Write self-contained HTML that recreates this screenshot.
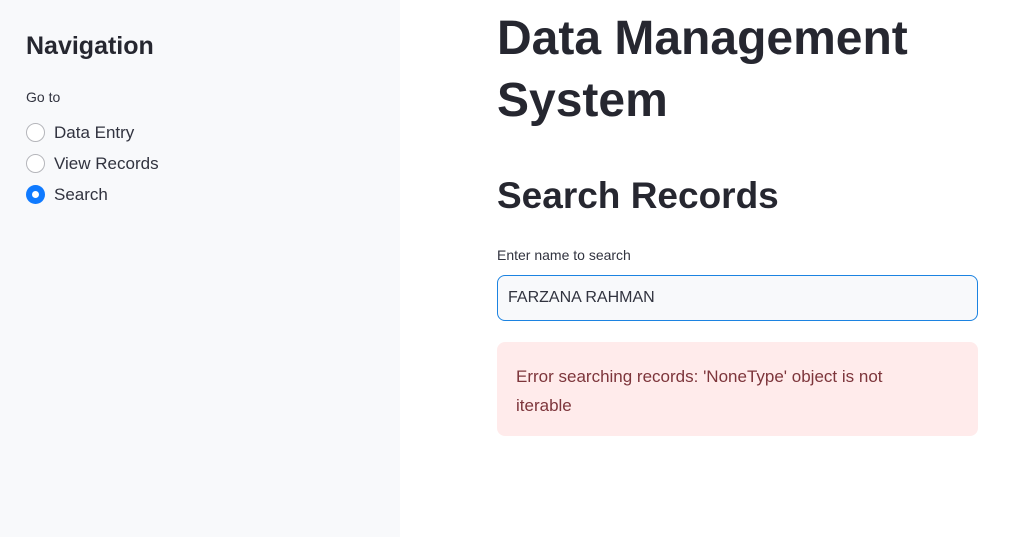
<!DOCTYPE html>
<html><head><style>
body{margin:0;width:1027px;height:537px;overflow:hidden;font-family:"Liberation Sans",sans-serif;color:#31333f;background:#fff;position:relative}
.sb{position:absolute;left:0;top:0;width:400px;height:537px;background:#f8f9fb}
.abs{position:absolute;white-space:nowrap}
.r{position:absolute;left:26px;width:17px;height:17px;border:1px solid #b5b6bb;border-radius:50%;background:#fff}
.r.on{border:none;width:19px;height:19px;background:#0f7aff}
.r.on::after{content:"";position:absolute;left:6px;top:6px;width:7px;height:7px;border-radius:50%;background:#fff}
.it{position:absolute;left:54px;font-size:17px}
</style></head><body>
<div class="sb">
<div class="abs" style="left:26px;top:32px;font-size:25px;font-weight:bold;color:#262730">Navigation</div>
<div class="abs" style="left:26px;top:89px;font-size:14px">Go to</div>
<div class="r" style="top:123px"></div><div class="it" style="top:123px">Data Entry</div>
<div class="r" style="top:154px"></div><div class="it" style="top:154px">View Records</div>
<div class="r on" style="top:185px"></div><div class="it" style="top:185px">Search</div>
</div>
<div class="abs" style="left:497px;top:8px;font-size:48px;font-weight:bold;line-height:62px;color:#262730">Data Management<br>System</div>
<div class="abs" style="left:497px;top:175px;font-size:37px;font-weight:bold;color:#262730">Search Records</div>
<div class="abs" style="left:497px;top:247px;font-size:14px">Enter name to search</div>
<div style="position:absolute;left:497px;top:275px;width:481px;height:46px;border:1px solid #1c83e1;border-radius:8px;background:#f8f9fb;box-sizing:border-box"></div>
<div class="abs" style="left:508px;top:289px;font-size:16px">FARZANA RAHMAN</div>
<div style="position:absolute;left:497px;top:342px;width:481px;height:94px;border-radius:8px;background:#ffebeb"></div>
<div class="abs" style="left:516px;top:362px;font-size:17px;line-height:29px;color:#7d353b">Error searching records: 'NoneType' object is not<br>iterable</div>
</body></html>
